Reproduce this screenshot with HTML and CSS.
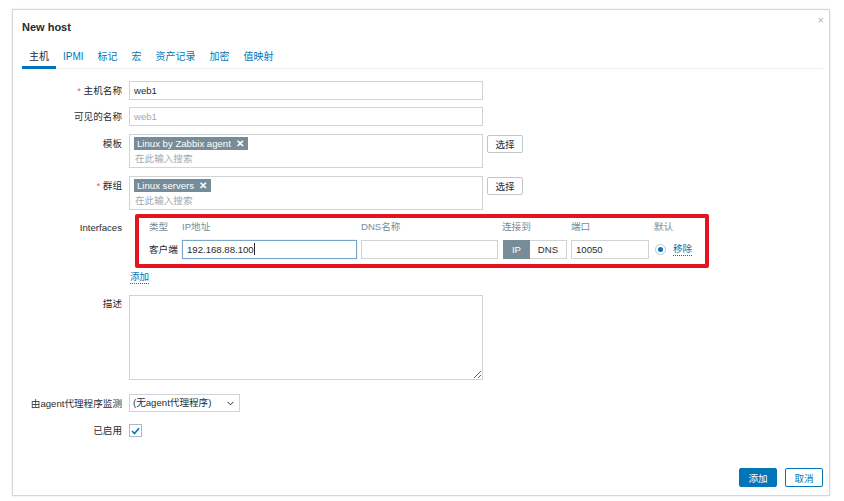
FILE: index.html
```html
<!DOCTYPE html>
<html>
<head>
<meta charset="utf-8">
<link rel="stylesheet" href="styles.css">
</head>
<body>
<div class="dialog">
  <div class="close">×</div>
  <div class="title">New host</div>
  <div class="tabs">
    <span class="tab active">主机</span>
    <span class="tab">IPMI</span>
    <span class="tab">标记</span>
    <span class="tab">宏</span>
    <span class="tab">资产记录</span>
    <span class="tab">加密</span>
    <span class="tab">值映射</span>
  </div>
  <div class="form">
    <div class="row">
      <label class="lbl"><span class="req">*</span> 主机名称</label>
      <div class="field"><div class="input wide">web1</div></div>
    </div>
    <div class="row r-2">
      <label class="lbl">可见的名称</label>
      <div class="field"><div class="input wide muted">web1</div></div>
    </div>
    <div class="row r-ms">
      <label class="lbl">模板</label>
      <div class="field inline">
        <div class="multi">
          <span class="tag">Linux by Zabbix agent <b>✕</b></span>
          <div class="ph">在此输入搜索</div>
        </div>
        <button class="btn-sel">选择</button>
      </div>
    </div>
    <div class="row r-ms">
      <label class="lbl"><span class="req">*</span> 群组</label>
      <div class="field inline">
        <div class="multi">
          <span class="tag">Linux servers <b>✕</b></span>
          <div class="ph">在此输入搜索</div>
        </div>
        <button class="btn-sel">选择</button>
      </div>
    </div>
    <div class="row r-if">
      <label class="lbl lbl-if">Interfaces</label>
      <div class="field">
        <div class="ifbox">
          <div class="ifgrid">
            <span class="th">类型</span>
            <span class="th">IP地址</span>
            <span class="th">DNS名称</span>
            <span class="th">连接到</span>
            <span class="th">端口</span>
            <span class="th">默认</span>
            <span class="td">客户端</span>
            <div class="input focus">192.168.88.100<span class="caret"></span></div>
            <div class="input"></div>
            <div class="seg"><span class="seg-on">IP</span><span class="seg-off">DNS</span></div>
            <div class="input">10050</div>
            <div class="dflt"><span class="radio"><span class="dot"></span></span><a class="link">移除</a></div>
          </div>
        </div>
        <a class="link add">添加</a>
      </div>
    </div>
    <div class="row r-desc">
      <label class="lbl">描述</label>
      <div class="field"><textarea class="ta"></textarea></div>
    </div>
    <div class="row r-sel">
      <label class="lbl">由agent代理程序监测</label>
      <div class="field">
        <div class="select">(无agent代理程序)
          <svg class="chev" width="7" height="5" viewBox="0 0 7 5"><path d="M0.5 0.8 L3.5 3.8 L6.5 0.8" fill="none" stroke="#1f2c33" stroke-width="1"/></svg>
        </div>
      </div>
    </div>
    <div class="row r-chk">
      <label class="lbl">已启用</label>
      <div class="field">
        <div class="chk"><svg width="9" height="8" viewBox="0 0 9 8"><path d="M1 4 L3.5 6.5 L8 1.2" fill="none" stroke="#0275b8" stroke-width="1.6"/></svg></div>
      </div>
    </div>
  </div>
  <div class="footer">
    <button class="btn-main">添加</button>
    <button class="btn-alt">取消</button>
  </div>
</div>
</body>
</html>
```
FILE: styles.css
```css
* { box-sizing: border-box; }
html, body { margin: 0; padding: 0; background: #fff; }
body {
  font-family: "Liberation Sans", Arial, "Noto Sans CJK SC", sans-serif;
  font-size: 9.6px;
  color: #1f2c33;
  width: 844px;
  height: 501px;
  overflow: hidden;
}
.dialog {
  position: relative;
  margin: 9px 0 0 12px;
  width: 818px;
  height: 487px;
  border: 1px solid #d5d9db;
  box-shadow: 0 0 2px rgba(0,0,0,0.12);
  background: #fff;
  padding: 10px 6px 8px 8px;
  display: flex;
  flex-direction: column;
}
.close {
  position: absolute;
  top: 4px;
  right: 5px;
  font-size: 11px;
  color: #acb4b8;
}
.title {
  font-size: 11px;
  font-weight: bold;
  line-height: 14px;
  padding-left: 1px;
}
.tabs {
  margin-top: 17px;
  display: flex;
  border-bottom: 1px solid #ebeef0;
}
.tab {
  padding: 0 7px 3px;
  font-size: 10px;
  line-height: 12px;
  color: #0275b8;
  border-bottom: 3px solid transparent;
  margin-bottom: -1px;
}
.tab:first-child { margin-left: 1px; }
.tab.active { color: #1f2c33; border-bottom-color: #0275b8; }
.form { margin-top: 12px; }
.row {
  display: grid;
  grid-template-columns: 101px 1fr;
  column-gap: 7px;
}
.r-2 { margin-top: 7px; }
.r-ms { margin-top: 8px; }
.r-if { margin-top: 4px; }
.r-desc { margin-top: 11px; }
.r-sel { margin-top: 14px; }
.r-chk { margin-top: 11px; }
.lbl {
  text-align: right;
  line-height: 19px;
  white-space: nowrap;
  padding-left: 1px;
}
.lbl-if { margin-top: 4px; }
.r-desc .lbl { margin-top: -1px; }
.r-chk .lbl { line-height: 13px; }
.req { color: #e45959; }
.inline { display: flex; align-items: flex-start; }
.input {
  height: 19px;
  border: 1px solid #cfd4d6;
  background: #fff;
  padding: 0 4px;
  line-height: 17px;
  white-space: nowrap;
}
.input.wide { width: 354px; }
.input.muted { color: #a0aab0; }
.input.focus { border-color: #7aa7c9; box-shadow: 0 0 1px #9ac0dc; }
.caret { display: inline-block; width: 1px; height: 12px; background: #1f2c33; vertical-align: -2px; }
.multi {
  width: 354px;
  height: 34px;
  border: 1px solid #cfd4d6;
  padding: 2px 3px;
}
.tag {
  display: inline-block;
  background: #768d99;
  color: #fff;
  line-height: 13px;
  padding: 0 4px 0 3px;
  margin-left: 1px;
}
.tag b { font-size: 10px; margin-left: 2px; }
.ph { color: #a0aab0; line-height: 14px; margin-top: 2px; margin-left: 2px; }
.btn-sel {
  margin-left: 4px;
  margin-top: 1px;
  width: 36px;
  height: 18px;
  border: 1px solid #bfc7cb;
  background: #fff;
  font: inherit;
  color: #1f2c33;
  padding: 0;
  border-radius: 2px;
}
.ifbox {
  margin-left: 6px;
  width: 574px;
  height: 54px;
  border: 4px solid #e3141f;
  border-radius: 2px;
  padding: 2px 10px 0 10px;
}
.ifgrid {
  display: grid;
  grid-template-columns: 29px 175px 137px 65px 78px auto;
  column-gap: 4px;
  row-gap: 6px;
  align-items: center;
}
.th { color: #768d99; line-height: 14px; white-space: nowrap; }
.ifgrid .th:nth-child(6) { margin-left: 1px; }
.td { line-height: 19px; white-space: nowrap; }
.seg { display: flex; height: 19px; margin-left: 1px; }
.seg-on {
  width: 27px;
  background: #768d99;
  color: #fff;
  text-align: center;
  line-height: 19px;
}
.seg-off {
  flex: 1;
  border: 1px solid #cfd4d6;
  border-left: none;
  text-align: center;
  line-height: 17px;
}
.dflt { display: flex; align-items: center; margin-left: 2px; }
.radio {
  width: 11px;
  height: 11px;
  border-radius: 50%;
  border: 1px solid #b8c8d4;
  display: flex;
  align-items: center;
  justify-content: center;
  margin-right: 7px;
}
.dot { width: 5px; height: 5px; border-radius: 50%; background: #0275b8; }
.link {
  color: #0275b8;
  text-decoration: none;
  border-bottom: 1px dotted #0275b8;
  line-height: 12px;
}
.add { display: table; margin-top: 3px; margin-left: 1px; }
.ta {
  display: block;
  width: 354px;
  height: 85px;
  border: 1px solid #cfd4d6;
  margin: 0;
  resize: vertical;
  font: inherit;
}
.select {
  position: relative;
  width: 111px;
  height: 18px;
  border: 1px solid #cfd4d6;
  line-height: 16px;
  padding-left: 3px;
  white-space: nowrap;
}
.chev { position: absolute; right: 5px; top: 6px; }
.chk {
  width: 13px;
  height: 13px;
  border: 1px solid #acbbc2;
  display: flex;
  align-items: center;
  justify-content: center;
}
.footer {
  margin-top: auto;
  display: flex;
  justify-content: flex-end;
  gap: 8px;
}
.btn-main, .btn-alt {
  width: 38px;
  height: 19px;
  font: inherit;
  padding: 0;
  border-radius: 2px;
}
.btn-main { background: #0275b8; color: #fff; border: 1px solid #0275b8; }
.btn-alt { background: #fff; color: #0275b8; border: 1px solid #0275b8; }
```
